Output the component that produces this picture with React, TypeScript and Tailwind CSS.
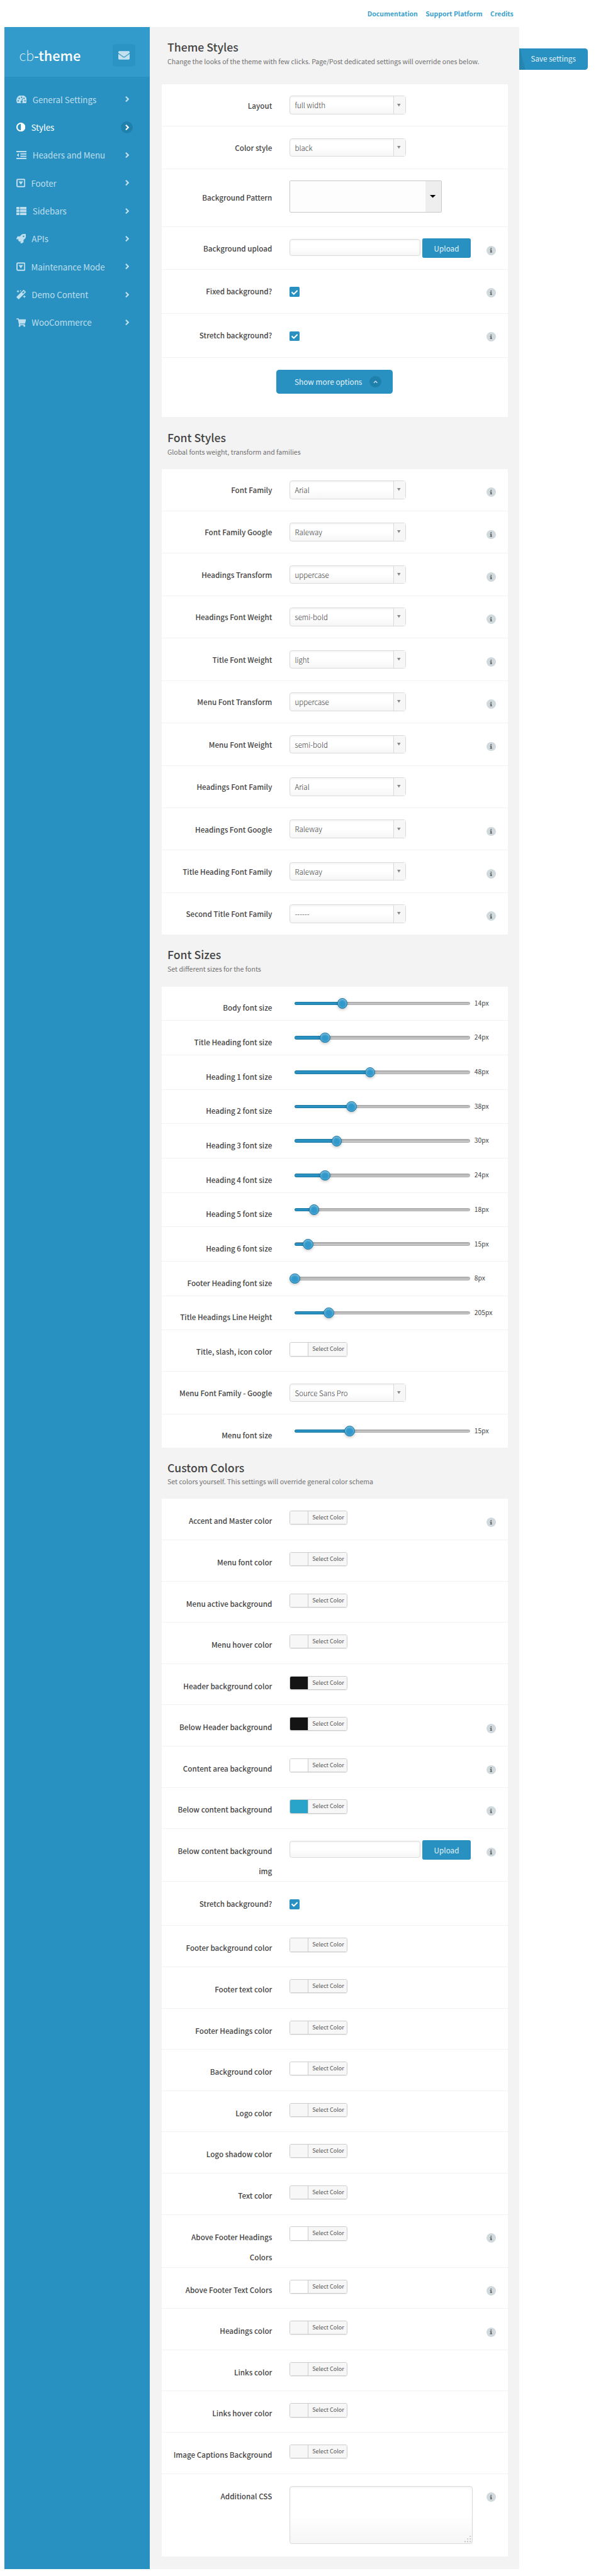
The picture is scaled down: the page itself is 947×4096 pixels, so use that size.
import type { ReactNode } from 'react';
import { FaCheck, FaEnvelope, FaMagic, FaRocket, FaShoppingCart } from 'react-icons/fa';

/* ---------- icons ---------- */

function GaugeIcon() {
  return (
    <svg viewBox="0 0 18 14" className="h-[14px] w-[18px]">
      <path d="M2.2 14 A9 9 0 1 1 15.8 14 Z" fill="currentColor" />
      <g fill="#2991c1">
        <circle cx="3.1" cy="9" r="1.25" />
        <circle cx="4.9" cy="4.8" r="1.25" />
        <circle cx="9" cy="3" r="1.25" />
        <circle cx="13.1" cy="4.8" r="1.25" />
        <circle cx="14.9" cy="9" r="1.25" />
        <circle cx="9" cy="10.8" r="1.9" />
        <path d="M8.4 10.5 L10 4.9 L11.1 5.2 L9.7 10.8 Z" />
      </g>
    </svg>
  );
}

function AdjustIcon() {
  return (
    <svg viewBox="128 128 1536 1536" className="h-[15.5px] w-[15.5px]" fill="currentColor">
      <path d="M896 1440v-1088q-148 0-273 73t-198 198-73 273 73 273 198 198 273 73zm768-544q0 209-103 385.5t-279.5 279.5-385.5 103-385.5-103-279.5-279.5-103-385.5 103-385.5 279.5-279.5 385.5-103 385.5 103 279.5 279.5 103 385.5z" />
    </svg>
  );
}

function OutdentIcon() {
  return (
    <svg viewBox="0 0 18 14" className="h-[14px] w-[18px]" fill="currentColor">
      <path d="M0 0h18v2.2H0zM7 4h11v2.2H7zM7 8h11v2.2H7zM0 11.8h18V14H0zM4.3 3.8v6.4L.6 7z" />
    </svg>
  );
}

function CaretSquareIcon() {
  return (
    <svg viewBox="0 0 16 15" className="h-[15px] w-[15.5px]">
      <rect x="1.1" y="1.1" width="13.8" height="12.8" rx="1.6" fill="none" stroke="currentColor" strokeWidth="2.2" />
      <path d="M4 4.700h8L8 10.600z" fill="currentColor" />
    </svg>
  );
}

function ListIcon() {
  return (
    <svg viewBox="0 0 18 14" className="h-[14px] w-[18px]" fill="currentColor">
      <rect x="0" y="0" width="5.2" height="4" rx=".6" />
      <rect x="6.2" y="0" width="11.8" height="4" rx=".6" />
      <rect x="0" y="5" width="5.2" height="4" rx=".6" />
      <rect x="6.2" y="5" width="11.8" height="4" rx=".6" />
      <rect x="0" y="10" width="5.2" height="4" rx=".6" />
      <rect x="6.2" y="10" width="11.8" height="4" rx=".6" />
    </svg>
  );
}

function InfoIcon() {
  return (
    <svg viewBox="0 0 5 8" className="h-[8px] w-[5px]" fill="currentColor">
      <path d="M1.5 0h2v1.700h-2zM.6 2.700h2.900v4h.9V8H.5V6.700h1V4H.6z" />
    </svg>
  );
}

function ChevronRight() {
  return (
    <svg viewBox="0 0 7 10" className="ml-px h-[10px] w-[7px]" fill="none" stroke="currentColor" strokeWidth="2.3">
      <path d="M1 .9 L5.2 5 L1 9.1" />
    </svg>
  );
}

/* ---------- sidebar ---------- */

const NAV: { label: string; icon: ReactNode; active?: boolean }[] = [
  { label: 'General Settings', icon: <GaugeIcon /> },
  { label: 'Styles', icon: <AdjustIcon />, active: true },
  { label: 'Headers and Menu', icon: <OutdentIcon /> },
  { label: 'Footer', icon: <CaretSquareIcon /> },
  { label: 'Sidebars', icon: <ListIcon /> },
  { label: 'APIs', icon: <FaRocket className="h-[16.5px] w-[16.5px]" /> },
  { label: 'Maintenance Mode', icon: <CaretSquareIcon /> },
  { label: 'Demo Content', icon: <FaMagic className="h-[16px] w-[16.5px]" /> },
  { label: 'WooCommerce', icon: <FaShoppingCart className="h-[15px] w-[16.5px]" /> },
];

function Sidebar() {
  return (
    <aside className="w-[250px] shrink-0 bg-[#2991c1]">
      <div className="flex h-[85px] items-start justify-between bg-[#339bcb] px-[25px]">
        <div className="mt-[33px] flex text-[23.5px] leading-[30px] text-white">
          <span className="font-thin">cb</span>
          <span className="font-medium">-theme</span>
        </div>
        <button className="mt-[29px] flex h-[39px] w-[39px] items-center justify-center rounded-[5px] bg-[#2c94c4] text-[#c3e0ee]">
          <FaEnvelope className="h-[19.5px] w-[19.5px]" />
        </button>
      </div>
      <nav className="pt-[15px]">
        {NAV.map((item) => (
          <a
            key={item.label}
            className={`flex h-12 items-center pr-[30px] pl-5 text-[14.4px] ${item.active ? 'text-white' : 'text-[#bfdfee]'}`}
          >
            {item.icon}
            <span className="ml-[10px] flex-1 pt-[2px] leading-[46px] whitespace-nowrap">{item.label}</span>
            <span
              className={`flex h-5 w-5 items-center justify-center rounded-full ${item.active ? 'bg-[#2080ac]' : ''}`}
            >
              <ChevronRight />
            </span>
          </a>
        ))}
      </nav>
    </aside>
  );
}

/* ---------- form controls ---------- */

const FIELD =
  'rounded-[4px] border border-[#dadada] bg-linear-to-b from-white from-50% to-[#f6f6f6] shadow-[inset_0_2px_3px_rgba(0,0,0,0.05)]';

function SelectBox({ value }: { value: string }) {
  return (
    <div className={`flex h-8 w-[200px] ${FIELD}`}>
      <span className="flex-1 pl-2 text-[12.5px] leading-[31px] font-light text-[#333]">{value}</span>
      <span className="flex w-5 justify-center border-l border-[#dadada] bg-[#f7f7f7] pt-3 pr-0.5">
        <svg viewBox="0 0 6 5" className="h-[5px] w-[6px]" fill="#888">
          <path d="M0 0h6L3 5z" />
        </svg>
      </span>
    </div>
  );
}

function PatternBox() {
  return (
    <div className="flex h-[55px] w-[262px] rounded-[2px] border border-[#c8c8c8] bg-[#fdfdfd]">
      <span className="flex-1" />
      <span className="flex w-[27px] items-center justify-center bg-[#eee] pr-0.5">
        <svg viewBox="0 0 10 5" className="h-[5px] w-[10px]" fill="#000">
          <path d="M0 0h10L5 5z" />
        </svg>
      </span>
    </div>
  );
}

function UploadBox() {
  return (
    <div className="flex items-start gap-[3px]">
      <div className={`h-[30px] w-[225px] ${FIELD}`} />
      <button className="-mt-[0.5px] h-[33px] w-[84px] rounded-[3px] bg-[#2991c1] text-[12.6px] leading-[32px] tracking-[0.1px] text-[#e4f2f9]">
        Upload
      </button>
    </div>
  );
}

function CheckBox() {
  return (
    <div className="mt-[10px] flex h-[17px] w-[17px] items-center justify-center rounded-[2px] bg-[#2991c1] text-white">
      <FaCheck className="mt-px h-[11px] w-[11px]" />
    </div>
  );
}

function Slider({ percent, value }: { percent: number; value: string }) {
  return (
    <div className="flex items-start">
      <div className="relative mt-[6px] ml-[9px] h-[6px] w-[302px] shrink-0 rounded-[3px] border border-[#a9a9a9] bg-linear-to-b from-[#adadad] to-[#cfcfcf]">
        <div
          className="absolute -top-px -left-px h-[6px] rounded-l-[3px] border border-[#1e78a2] bg-[#2991c1]"
          style={{ width: `${percent}%` }}
        />
        <div
          className="absolute -top-[7px] -ml-[10px] h-[18px] w-[18px] rounded-full border border-[#1f7ca8] bg-[#3098ca] shadow-[inset_0_1px_4px_rgba(255,255,255,0.55),0_2px_5px_rgba(0,0,0,0.22)]"
          style={{ left: `${percent}%` }}
        />
      </div>
      <span className="-mt-[1.5px] ml-[7px] text-[11.2px] leading-5 text-[#444]">{value}</span>
    </div>
  );
}

const SWATCH = {
  none: 'bg-[#f7f7f7]',
  white: 'bg-white',
  black: 'bg-[#141414]',
  blue: 'bg-[#28a3c9]',
};

function ColorButton({ tone }: { tone: keyof typeof SWATCH }) {
  return (
    <div className="mt-[0.5px] flex h-[24px] w-[100px] overflow-hidden rounded-[3px] border border-[#ccc] shadow-[0_1px_0_rgba(0,0,0,0.08)]">
      <span className={`w-[30px] ${SWATCH[tone]}`} />
      <span className="flex-1 border-l border-[#ccc] bg-[#f7f7f7] pl-[7px] text-[9.75px] leading-[21.5px] whitespace-nowrap text-[#555]">
        Select Color
      </span>
    </div>
  );
}

function TextArea() {
  return (
    <div className={`mt-px flex h-[100px] w-[315px] items-end justify-end p-px ${FIELD}`}>
      <svg viewBox="0 0 12 12" className="h-[12px] w-[12px]" fill="#c4c4c4">
        <path d="M9 0h2v2H9zM9 4.5h2v2H9zM9 9h2v2H9zM4.5 4.5h2v2h-2zM4.5 9h2v2h-2zM0 9h2v2H0z" />
      </svg>
    </div>
  );
}

/* ---------- page structure ---------- */

function Row({
  label,
  info,
  height,
  labelPad = 'pt-[19px]',
  children,
}: {
  label: string;
  info?: boolean;
  height: string;
  labelPad?: string;
  children: ReactNode;
}) {
  return (
    <div className={`flex items-start border-b border-[#f2f2f2] ${height}`}>
      <div className={`w-[190px] pl-3 text-right text-[12.65px] leading-[35px] font-medium text-[#444] ${labelPad}`}>
        {label}
      </div>
      <div className="ml-[30px] w-[339px] shrink-0 pt-5">{children}</div>
      {info && (
        <span className="mt-8 flex h-4 w-4 items-center justify-center rounded-full bg-[#d0d9dd] text-[#5f5f5f]">
          <InfoIcon />
        </span>
      )}
    </div>
  );
}

function Section({
  title,
  text,
  head,
  children,
}: {
  title: string;
  text: string;
  head: string;
  children: ReactNode;
}) {
  return (
    <section>
      <header className={`px-[10px] ${head}`}>
        <h2 className="text-[19.1px] leading-7 font-medium text-[#444]">{title}</h2>
        <p className="text-[11.45px] leading-[21.5px] whitespace-nowrap text-[#707070]">{text}</p>
      </header>
      <div className="bg-white">{children}</div>
    </section>
  );
}

const FONT_ROWS: [string, string, boolean][] = [
  ['Font Family', 'Arial', true],
  ['Font Family Google', 'Raleway', true],
  ['Headings Transform', 'uppercase', true],
  ['Headings Font Weight', 'semi-bold', true],
  ['Title Font Weight', 'light', true],
  ['Menu Font Transform', 'uppercase', true],
  ['Menu Font Weight', 'semi-bold', true],
  ['Headings Font Family', 'Arial', false],
  ['Headings Font Google', 'Raleway', true],
  ['Title Heading Font Family', 'Raleway', true],
  ['Second Title Font Family', '------', true],
];

const SIZE_ROWS: [string, number, string][] = [
  ['Body font size', 27.3, '14px'],
  ['Title Heading font size', 17.3, '24px'],
  ['Heading 1 font size', 43.2, '48px'],
  ['Heading 2 font size', 32.6, '38px'],
  ['Heading 3 font size', 24, '30px'],
  ['Heading 4 font size', 17.3, '24px'],
  ['Heading 5 font size', 11, '18px'],
  ['Heading 6 font size', 7.7, '15px'],
  ['Footer Heading font size', 0, '8px'],
  ['Title Headings Line Height', 19.6, '205px'],
];

type ColorRowData = [string, keyof typeof SWATCH, boolean?];

const COLORS_TOP: ColorRowData[] = [
  ['Accent and Master color', 'none', true],
  ['Menu font color', 'none'],
  ['Menu active background', 'none'],
  ['Menu hover color', 'none'],
  ['Header background color', 'black'],
  ['Below Header background', 'black', true],
  ['Content area background', 'white', true],
  ['Below content background', 'blue', true],
];

const COLORS_MIDDLE: ColorRowData[] = [
  ['Footer background color', 'none'],
  ['Footer text color', 'none'],
  ['Footer Headings color', 'none'],
  ['Background color', 'white'],
  ['Logo color', 'none'],
  ['Logo shadow color', 'none'],
  ['Text color', 'none'],
];

const COLORS_BOTTOM: ColorRowData[] = [
  ['Above Footer Text Colors', 'white', true],
  ['Headings color', 'none', true],
  ['Links color', 'none'],
  ['Links hover color', 'none'],
  ['Image Captions Background', 'none'],
];

function ColorRows({ rows }: { rows: ColorRowData[] }) {
  return (
    <>
      {rows.map(([label, tone, info]) => (
        <Row key={label} label={label} info={info} height="h-[71px]" labelPad="pt-[20.5px]">
          <ColorButton tone={tone} />
        </Row>
      ))}
    </>
  );
}

export default function App() {
  return (
    <div className="h-[4433px] w-[1025px] bg-white font-['Noto_Sans_CJK_SC','Noto_Sans',sans-serif] [zoom:0.9239]">
      <div className="flex h-[47px] w-[883px] justify-end gap-[13.5px] pt-[14px] text-[11.35px] leading-5 font-bold text-[#3a9fcc]">
        <a>Documentation</a>
        <a>Support Platform</a>
        <a>Credits</a>
      </div>

      <div className="ml-2 flex h-[4374px] items-stretch">
        <Sidebar />

        <main className="w-[635px] shrink-0 bg-[#f3f3f3] px-5">
          <Section
            title="Theme Styles"
            text="Change the looks of the theme with few clicks. Page/Post dedicated settings will override ones below."
            head="h-[98px] pt-[20.5px]"
          >
            <Row label="Layout" height="h-[73px]">
              <SelectBox value="full width" />
            </Row>
            <Row label="Color style" height="h-[73px]">
              <SelectBox value="black" />
            </Row>
            <Row label="Background Pattern" height="h-[100px]" labelPad="pt-[31.5px]">
              <PatternBox />
            </Row>
            <Row label="Background upload" info height="h-[73px]" labelPad="pt-[19.5px]">
              <UploadBox />
            </Row>
            <Row label="Fixed background?" info height="h-[76px]" labelPad="pt-5">
              <CheckBox />
            </Row>
            <Row label="Stretch background?" info height="h-[76px]" labelPad="pt-5">
              <CheckBox />
            </Row>
            <div className="flex h-[102px] items-start justify-center pt-5">
              <button className="flex h-[42px] w-[200px] items-center rounded-[5px] bg-[#2991c1] pr-5 pl-[31px] text-left text-[12.85px] text-[#e4f2f9]">
                <span className="flex-1 leading-[38px] whitespace-nowrap">Show more options</span>
                <span className="flex h-5 w-5 items-center justify-center rounded-full bg-[#2080ac]">
                  <svg viewBox="0 0 8 5" className="h-[5px] w-[8px]" fill="none" stroke="currentColor" strokeWidth="1.2">
                    <path d="M1 4.2 L4 1.2 L7 4.2" />
                  </svg>
                </span>
              </button>
            </div>
          </Section>

          <Section title="Font Styles" text="Global fonts weight, transform and families" head="h-[89px] pt-[21px]">
            {FONT_ROWS.map(([label, value, info]) => (
              <Row key={label} label={label} info={info} height="h-[73px]">
                <SelectBox value={value} />
              </Row>
            ))}
          </Section>

          <Section title="Font Sizes" text="Set different sizes for the fonts" head="h-[88px] pt-[19px]">
            {SIZE_ROWS.map(([label, percent, value]) => (
              <Row key={label} label={label} height="h-[59.2px]">
                <Slider percent={percent} value={value} />
              </Row>
            ))}
            <Row label="Title, slash, icon color" height="h-[71px]">
              <ColorButton tone="white" />
            </Row>
            <Row label="Menu Font Family - Google" height="h-[73px]">
              <SelectBox value="Source Sans Pro" />
            </Row>
            <Row label="Menu font size" height="h-[59px]">
              <Slider percent={31.5} value="15px" />
            </Row>
          </Section>

          <Section
            title="Custom Colors"
            text="Set colors yourself. This settings will override general color schema"
            head="h-[87px] pt-[19px]"
          >
            <ColorRows rows={COLORS_TOP} />
            <Row label="Below content background img" info height="h-[91px]" labelPad="pt-[20.5px]">
              <UploadBox />
            </Row>
            <Row label="Stretch background?" height="h-[76px]" labelPad="pt-[20.5px]">
              <CheckBox />
            </Row>
            <ColorRows rows={COLORS_MIDDLE} />
            <Row label="Above Footer Headings Colors" info height="h-[91px]" labelPad="pt-[20.5px]">
              <ColorButton tone="white" />
            </Row>
            <ColorRows rows={COLORS_BOTTOM} />
            <Row label="Additional CSS" info height="h-[143px]" labelPad="pt-[20.5px]">
              <TextArea />
            </Row>
          </Section>
        </main>

        <button className="mt-9 flex h-[37px] w-[118px] overflow-hidden rounded-r-[5px] bg-[#2991c1] text-[12.65px] leading-[35px] text-[#e4f2f9]">
          <svg viewBox="0 0 11 37" className="h-[37px] w-[11px]" fill="#2584b0">
            <path d="M0 0h1L10.500 37H0z" />
          </svg>
          <span className="ml-[9px] whitespace-nowrap">Save settings</span>
        </button>
      </div>
    </div>
  );
}
